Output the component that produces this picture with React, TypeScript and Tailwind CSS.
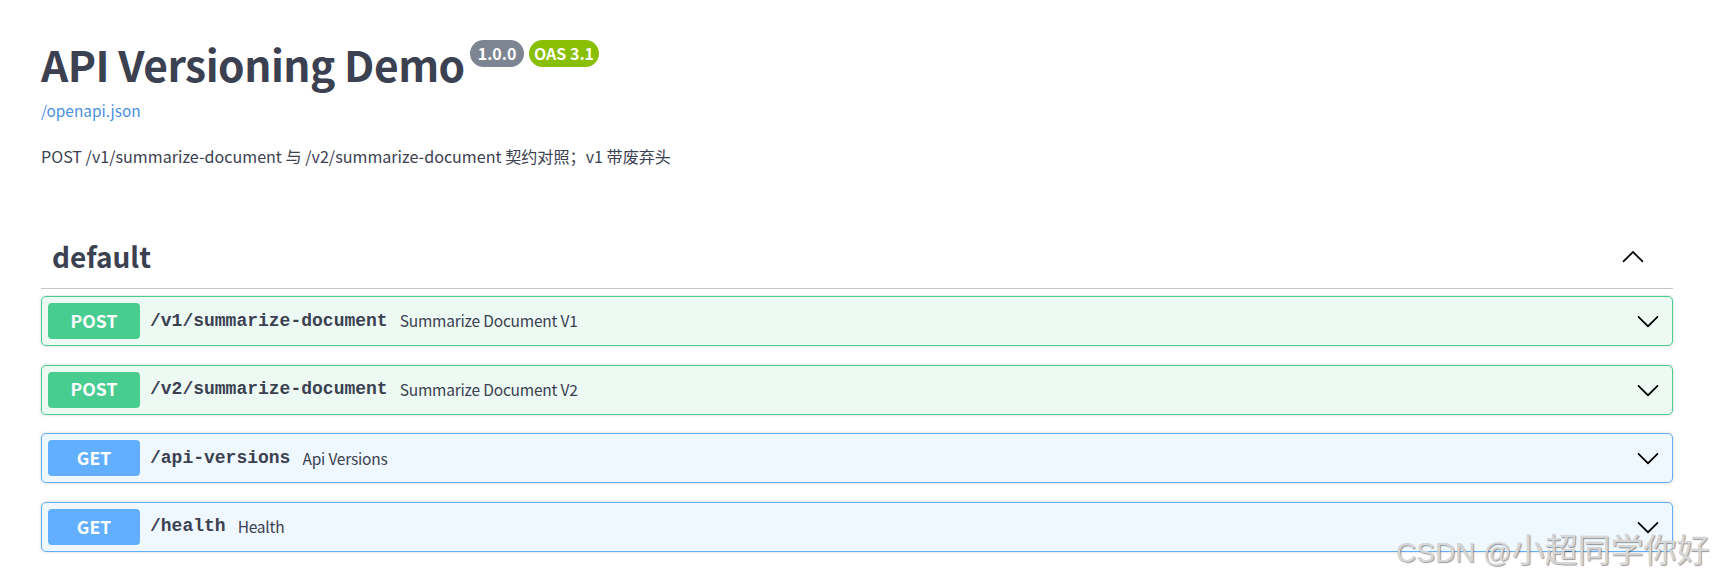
import React from "react";

const SANS = { fontFamily: '"Noto Sans CJK SC", "Noto Sans", sans-serif' };
const MONO = { fontFamily: '"Liberation Mono", "DejaVu Sans Mono", monospace' };

function ChevronDown() {
  return (
    <svg width="24" height="24" viewBox="0 0 20 20" className="shrink-0">
      <path
        fill="#000"
        d="M17.418 6.109c.272-.268.709-.268.979 0s.271.701 0 .969l-7.908 7.83c-.27.268-.707.268-.979 0l-7.908-7.83c-.27-.268-.27-.701 0-.969.271-.268.709-.268.979 0L10 13.25l7.418-7.141z"
      />
    </svg>
  );
}

function ChevronUp() {
  return (
    <svg width="24" height="24" viewBox="0 0 20 20" className="shrink-0">
      <path
        fill="#000"
        d="M17.418 14.908c.272.268.709.268.979 0s.271-.701 0-.969l-7.908-7.83c-.27-.268-.707-.268-.979 0l-7.908 7.83c-.27.268-.27.701 0 .969.271.268.709.268.979 0L10 7.752l7.418 7.156z"
      />
    </svg>
  );
}

type Op = { method: "POST" | "GET"; path: string; summary: string };

const ops: Op[] = [
  { method: "POST", path: "/v1/summarize-document", summary: "Summarize Document V1" },
  { method: "POST", path: "/v2/summarize-document", summary: "Summarize Document V2" },
  { method: "GET", path: "/api-versions", summary: "Api Versions" },
  { method: "GET", path: "/health", summary: "Health" },
];

function OpRow({ op }: { op: Op }) {
  const isPost = op.method === "POST";
  return (
    <div
      className={
        "flex h-[50px] items-center rounded-[5px] border pl-[6px] pr-[12px] shadow-[0_0_3px_rgba(0,0,0,0.19)] " +
        (isPost ? "border-[#49cc90] bg-[#edfaf4]" : "border-[#61affe] bg-[#eff7ff]")
      }
    >
      <div
        className={
          "flex h-[36px] w-[92px] shrink-0 items-center justify-center rounded-[4px] text-[17.6px] font-bold text-white " +
          (isPost ? "bg-[#49cc90]" : "bg-[#61affe]")
        }
        style={SANS}
      >
        {op.method}
      </div>
      <span className="ml-[10px] text-[18px] font-bold text-[#3b4151]" style={MONO}>
        {op.path}
      </span>
      <span className="ml-[12px] flex-1 text-[15.5px] tracking-[-0.2px] text-[#3b4151]" style={SANS}>
        {op.summary}
      </span>
      <ChevronDown />
    </div>
  );
}

export default function App() {
  return (
    <div className="relative min-h-[574px] w-full overflow-hidden bg-white text-[#3b4151]" style={SANS}>
      <div className="ml-[41px] w-[1632px] pt-[38px]">
        <div className="flex items-start">
          <h1 className="text-[42.5px] font-bold leading-[52px] tracking-[-0.5px] text-[#3b4151]">
            API Versioning Demo
          </h1>
          <div className="ml-[5px] mt-[1.5px] flex gap-[5px]">
            <span className="flex h-[27px] items-center rounded-full bg-[#7d8492] px-[8px] text-[16px] font-bold text-white">
              1.0.0
            </span>
            <span className="flex h-[27px] items-center rounded-full bg-[#89bf04] px-[4.5px] text-[16px] font-bold text-white">
              OAS 3.1
            </span>
          </div>
        </div>
        <div className="mt-[10px] text-[15.4px] leading-[20px] text-[#4990e2]">/openapi.json</div>
        <div className="mt-[26px] text-[16.1px] leading-[20px] text-[#3b4151]">
          POST /v1/summarize-document 与 /v2/summarize-document 契约对照；v1 带废弃头
        </div>

        <div className="mt-[72px] flex items-center border-b border-[#c4c6cb] pb-[14px] pl-[11px] pr-[28px]">
          <h3 className="flex-1 text-[28px] font-bold leading-[36px] text-[#3b4151]">default</h3>
          <ChevronUp />
        </div>

        <div className="mt-[7px] flex flex-col gap-[18.6px]">
          {ops.map((op) => (
            <OpRow key={op.path} op={op} />
          ))}
        </div>
      </div>

      <div className="pointer-events-none absolute left-[1396px] top-[524px] flex items-baseline whitespace-nowrap text-[#d6d6d6] [text-shadow:1px_1px_1px_rgba(0,0,0,0.4)]">
        <span className="text-[28px]" style={{ fontFamily: '"Liberation Sans", Arial, sans-serif' }}>
          CSDN @
        </span>
        <span className="text-[33px]" style={{ fontFamily: '"Noto Sans CJK SC", sans-serif' }}>
          小超同学你好
        </span>
      </div>
    </div>
  );
}
